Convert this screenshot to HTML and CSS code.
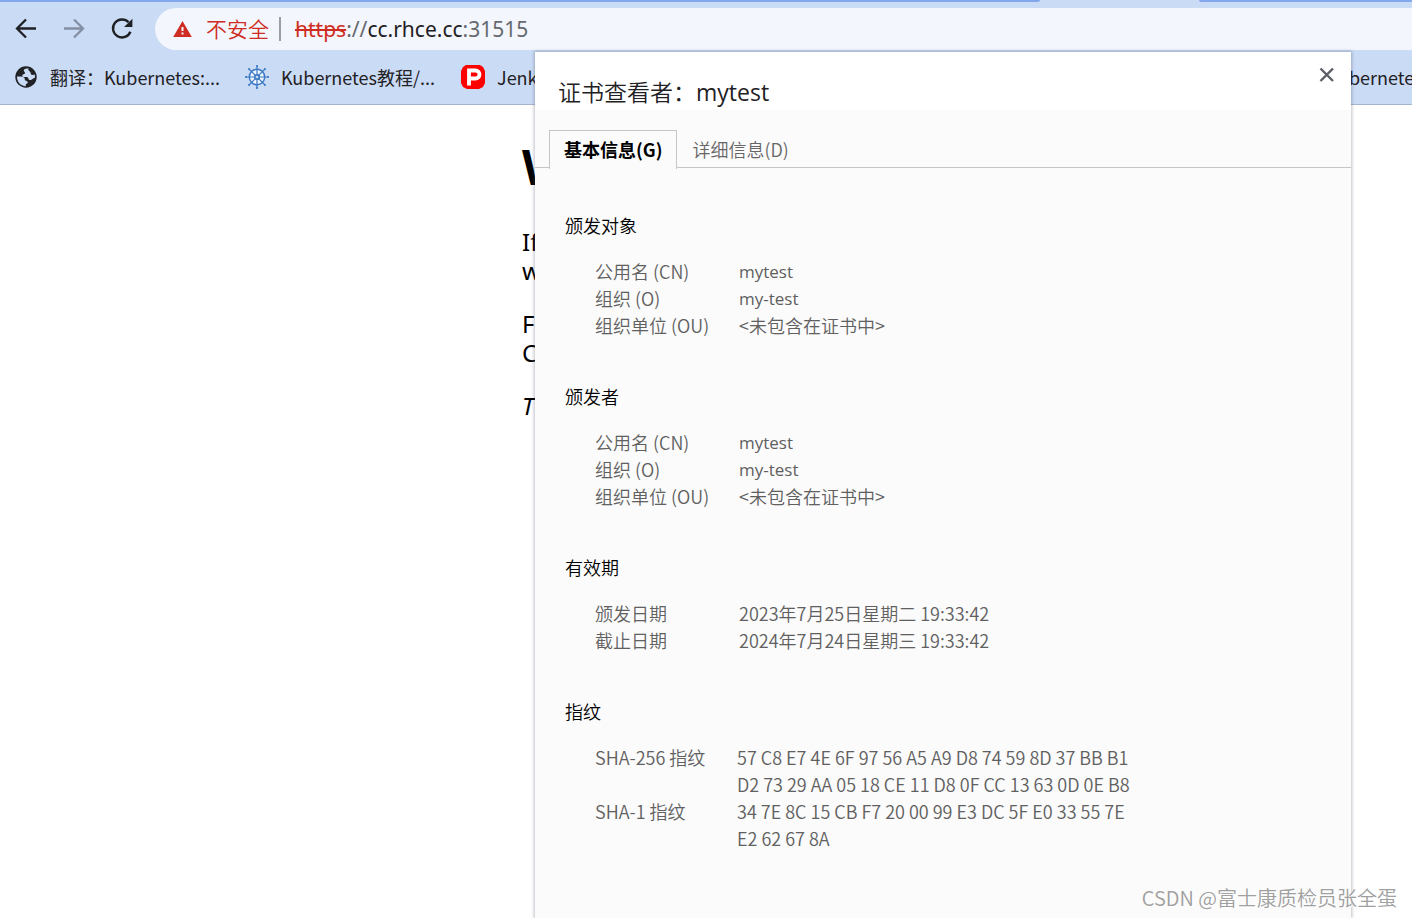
FILE: index.html
```html
<!DOCTYPE html>
<html lang="zh-CN">
<head>
<meta charset="utf-8">
<title>证书查看者：mytest</title>
<link rel="stylesheet" href="styles.css">
</head>
<body>
<div class="browser">
  <div class="tabstrip"><span class="strip strip-left"></span><span class="strip strip-right"></span></div>
  <header class="toolbar">
    <nav class="nav-buttons">
      <button class="nav-button" type="button" aria-label="后退">
        <svg width="24" height="24" viewBox="0 0 24 24"><path d="M22 11.500H3.500M12 2.500l-9 9 9 9" fill="none" stroke="#1f2124" stroke-width="2.300"/></svg>
      </button>
      <button class="nav-button" type="button" aria-label="前进">
        <svg width="24" height="24" viewBox="0 0 24 24"><path d="M2 11.500h18.500M12 2.500l9 9-9 9" fill="none" stroke="#858fa3" stroke-width="2.300"/></svg>
      </button>
      <button class="nav-button" type="button" aria-label="重新加载">
        <svg width="24" height="24" viewBox="0 0 24 24"><path d="M20.400 14.700A9 9 0 1 1 18.600 5.300" fill="none" stroke="#1f2124" stroke-width="2.400"/><path d="M22.400 1.800v8.300h-8.300z" fill="#1f2124"/></svg>
      </button>
    </nav>
    <div class="omnibox">
      <svg class="warning" width="20" height="18" viewBox="0 0 20 18"><path d="M10.500 1l9.300 16H1.200z" fill="#cf2d23"/><path d="M9.500 7h2v4h-2zM9.500 12.500h2v2h-2z" fill="#f3f6fc"/></svg>
      <span class="insecure">不安全</span>
      <span class="divider"></span>
      <span class="url"><s class="scheme">https</s><span class="muted">://</span>cc.rhce.cc<span class="muted">:31515</span></span>
    </div>
  </header>
  <nav class="bookmarks">
    <a class="bookmark" href="#">
      <svg width="24" height="24" viewBox="0 0 24 24"><circle cx="12" cy="12" r="10.700" fill="#202226"/><path d="M14.600 3.600C11 3 9.800 4.200 9.800 5.600c0 1.300 1.200 1.300 1.200 2.500 0 1.500-2.800 1-2.800 2.700 0 1.300 1.500 1.200 3.600 1.200 1.800 0 2.600.6 2.700 1.800.1 1.300 1 1.200 2.400 1.200 1.500 0 1.700-2 3.900-1.900.3-1.200.2-2.500-.1-3.600-1.800.7-3.400.6-3.900-.5-.4-.9.100-1.500-.7-2.200-1.200-1-2.300-1.500-1.500-3.200z" fill="#cadbf5"/><path d="M3 11.500c2.800-.2 6.600 0 7.500 1.400.6 1-.1 2 .9 2.500 1.300.6 2.600.8 2.300 2.300-.3 1.300-2 .8-2 2.300 0 .5.100.8.300 1.200C6.500 21.100 2.700 16.500 3 11.500z" fill="#cadbf5"/></svg>
      <span class="bookmark-text">翻译：Kubernetes:...</span>
    </a>
    <a class="bookmark bookmark-wide" href="#">
      <svg width="24" height="24" viewBox="0 0 24 24"><circle cx="12" cy="12" r="8" fill="#eef4fc"/><g fill="none" stroke="#3978c3"><circle cx="12" cy="12" r="7.700" stroke-width="1.500"/><circle cx="12" cy="12" r="2.500" stroke-width="1.200"/><path d="M12 .5v23M.5 12h23M4 4l16 16M20 4L4 20" stroke-width="1.200"/><path d="M11 1h2M11 23h2M1 11v2M23 11v2M3.400 4.600l1.200-1.200M19.400 3.400l1.200 1.200M3.400 19.400l1.200 1.200M19.400 20.600l1.200-1.200" stroke-width="1.500"/></g><circle cx="12" cy="12" r="1.100" fill="#eef4fc"/></svg>
      <span class="bookmark-text">Kubernetes教程/...</span>
    </a>
    <a class="bookmark" href="#">
      <svg width="24" height="24" viewBox="0 0 24 24"><path d="M5 0h14l3 2 2 4v12l-2 4-4 2H6l-4-2-2-4V6l2-4z" fill="#fe0000"/><path d="M8 20.500V5.500h6.500a3.700 3.700 0 0 1 0 8H8" fill="none" stroke="#fff" stroke-width="3.800"/></svg>
      <span class="bookmark-text">Jenk</span>
    </a>
    <a class="bookmark bookmark-last" href="#"><span class="bookmark-text">bernete</span></a>
  </nav>
  <main class="page">
    <h1>W</h1>
    <p>If<br>w</p>
    <p>F<br>C</p>
    <p><em>T</em></p>
  </main>

  <section class="dialog" role="dialog" aria-labelledby="dialog-title">
    <header class="dialog-header">
      <h2 id="dialog-title">证书查看者：<span class="title-name">mytest</span></h2>
      <button class="close" type="button" aria-label="关闭">
        <svg width="16" height="16" viewBox="0 0 16 16"><path d="M1.500 1.500l12.500 12.500M14 1.500L1.500 14" stroke="#5b5f65" stroke-width="2.400"/></svg>
      </button>
    </header>
    <div class="tabs" role="tablist">
      <button class="tab tab-active" type="button" role="tab" aria-selected="true">基本信息(G)</button>
      <button class="tab" type="button" role="tab" aria-selected="false">详细信息(D)</button>
    </div>
    <div class="details">
      <section class="group">
        <h3>颁发对象</h3>
        <table>
          <tr><th>公用名 (CN)</th><td class="latin">mytest</td></tr>
          <tr><th>组织 (O)</th><td class="latin">my-test</td></tr>
          <tr><th>组织单位 (OU)</th><td>&lt;未包含在证书中&gt;</td></tr>
        </table>
      </section>
      <section class="group">
        <h3>颁发者</h3>
        <table>
          <tr><th>公用名 (CN)</th><td class="latin">mytest</td></tr>
          <tr><th>组织 (O)</th><td class="latin">my-test</td></tr>
          <tr><th>组织单位 (OU)</th><td>&lt;未包含在证书中&gt;</td></tr>
        </table>
      </section>
      <section class="group">
        <h3>有效期</h3>
        <table>
          <tr><th>颁发日期</th><td>2023年7月25日星期二 19:33:42</td></tr>
          <tr><th>截止日期</th><td>2024年7月24日星期三 19:33:42</td></tr>
        </table>
      </section>
      <section class="group">
        <h3>指纹</h3>
        <table class="prints">
          <tr><th>SHA-256 指纹</th><td>57 C8 E7 4E 6F 97 56 A5 A9 D8 74 59 8D 37 BB B1<br>D2 73 29 AA 05 18 CE 11 D8 0F CC 13 63 0D 0E B8</td></tr>
          <tr><th>SHA-1 指纹</th><td>34 7E 8C 15 CB F7 20 00 99 E3 DC 5F E0 33 55 7E<br>E2 62 67 8A</td></tr>
        </table>
      </section>
    </div>
  </section>
  <div class="watermark">CSDN @富士康质检员张全蛋</div>
</div>
</body>
</html>
```
FILE: styles.css
```css
* { box-sizing: border-box; }
body {
  margin: 0;
  background: #fff;
  color: #1f2124;
  font-family: "Noto Sans CJK SC", sans-serif;
}
button { border: 0; padding: 0; background: none; font: inherit; }
.browser { position: relative; min-height: 100vh; overflow: hidden; }

.tabstrip { display: flex; justify-content: space-between; height: 8px; background: #cadbf5; }
.strip { height: 2px; background: #80a8ea; }
.strip-left { width: 1040px; border-bottom-right-radius: 4px; }
.strip-right { width: 213px; border-bottom-left-radius: 4px; }

.toolbar { display: flex; align-items: center; height: 42px; padding-left: 14px; background: #cadbf5; }
.nav-buttons { display: flex; gap: 24px; width: 141px; }
.nav-button { display: flex; width: 24px; height: 24px; }
.omnibox {
  display: flex;
  align-items: center;
  flex: 1;
  height: 42px;
  padding-left: 17px;
  border-radius: 21px 0 0 21px;
  background: #f3f6fc;
}
.insecure { margin-left: 14px; padding-bottom: 2px; color: #cf2d23; font-size: 21px; font-weight: 350; }
.divider { width: 2px; height: 24px; margin: 0 14px 0 10px; background: #9a9da2; }
.url { font-family: "Noto Sans", sans-serif; font-size: 21px; }
.scheme { color: #cf2d23; }
.muted { color: #66696e; }

.bookmarks {
  display: flex;
  align-items: center;
  height: 55px;
  padding-left: 14px;
  border-bottom: 1px solid #a5b5d0;
  background: #cadbf5;
}
.bookmark { display: flex; align-items: center; gap: 12px; width: 231px; flex: none; color: inherit; font-size: 18px; text-decoration: none; white-space: nowrap; }
.bookmark-wide { width: 216px; }
.bookmark-last { width: 63px; margin-left: auto; }

.page { padding: 34px 0 0 522px; color: #000; font-family: "Noto Sans", sans-serif; font-size: 24px; line-height: 29px; white-space: nowrap; }
.page h1 { margin: 0 0 32px; font-size: 48px; line-height: 56px; }
.page p { margin: 0 0 24px; }

.dialog {
  position: absolute;
  top: 52px;
  right: 61px;
  bottom: 0;
  left: 535px;
  background: #fbfbfb;
  box-shadow: 0 0 3px 1px rgba(70, 80, 100, 0.35);
}
.dialog-header { display: flex; justify-content: space-between; height: 58px; padding: 15px 16px 0 23px; background: #fff; }
.dialog-header h2 { margin: 7px 0 0; font-size: 23px; font-weight: 350; line-height: 34px; }
.title-name { font-family: "Open Sans", sans-serif; font-weight: 400; }
.close { display: flex; width: 16px; height: 16px; }
.tabs { display: flex; height: 58px; padding: 20px 0 0 14px; border-bottom: 1px solid #c6c6c6; }
.tab { height: 38px; padding: 0 16px 1px; color: #666; font-size: 18px; font-weight: 350; }
.tab-active { height: 39px; padding: 0 13px 3px 14px; border: 1px solid #c6c6c6; border-bottom: 0; background: #fbfbfb; color: #000; font-weight: 700; }
.details { padding: 44px 30px 0; font-size: 18px; font-weight: 350; line-height: 27px; }
.group { margin-bottom: 44px; }
.group h3 { margin: 0 0 19px; color: #000; font-size: 18px; font-weight: 350; line-height: 27px; }
table { margin-left: 30px; border-collapse: collapse; color: #606060; }
th, td { padding: 0; font-weight: inherit; text-align: left; vertical-align: top; white-space: nowrap; }
th { width: 144px; }
.prints th { width: 142px; }
.latin { font-family: "Open Sans", sans-serif; font-size: 17px; font-weight: 400; }

.watermark {
  position: absolute;
  right: 15px;
  bottom: 5px;
  color: #a0a0a0;
  font-size: 20px;
  font-weight: 350;
  line-height: 30px;
  text-shadow: 1px 1px 0 #fff;
}
```
